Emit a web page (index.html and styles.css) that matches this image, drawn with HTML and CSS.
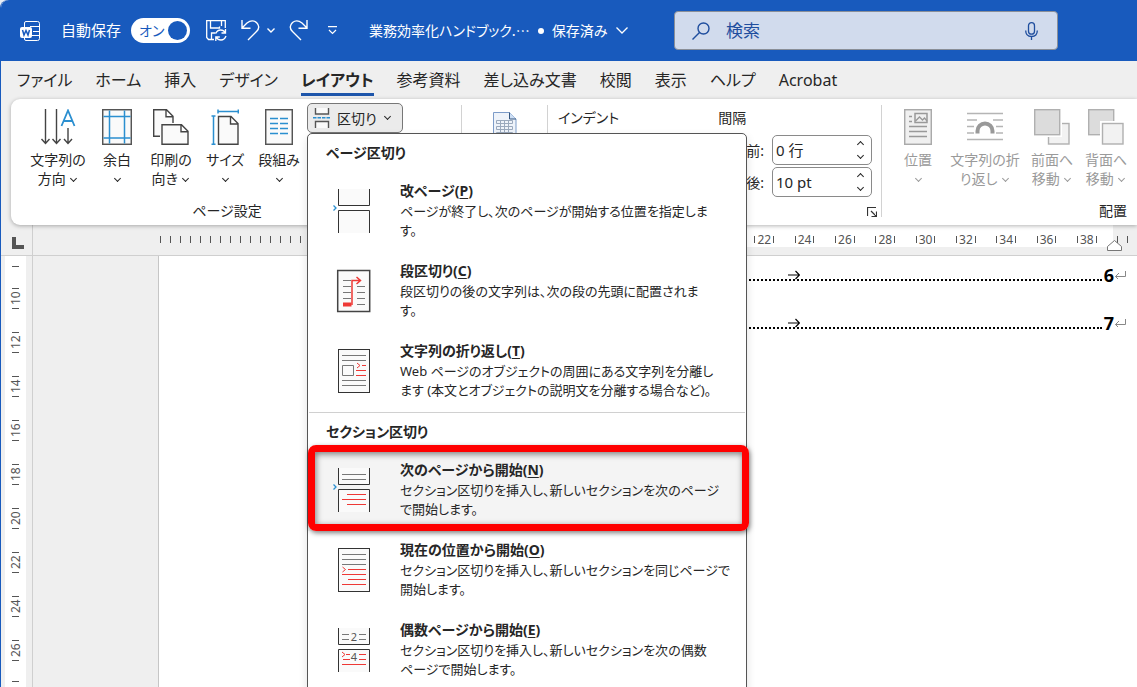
FILE: index.html
```
<!DOCTYPE html>
<html lang="ja">
<head>
  <meta charset="UTF-8">
  <meta name="viewport" content="width=device-width, initial-scale=1.0">
  <title>業務効率化ハンドブック</title>
  <link rel="stylesheet" href="styles.css">
</head>
<body>
  <div class="window">
    <!-- Title bar -->
    <header class="titlebar">
      <svg class="word-logo" width="20" height="20" viewBox="0 0 20 20" fill="none" stroke="#fff">
        <path d="M4.500 6V2q0-1.500 1.500-1.500h11.500q2 0 2 2v15q0 2-2 2H6q-1.500 0-1.500-1.500v-2M10 5.500h9.500M13 10.500h6.500M12 14.500h7.500"/>
        <rect x="0" y="6" width="12" height="11" rx="2" fill="#fff" stroke="none"/>
        <path d="M2.500 9l1.500 5 2-4.500 2 4.500 1.500-5" stroke="#185abd" stroke-width="1.500"/>
      </svg>
      <label class="autosave">自動保存
        <span class="switch">オン<input type="checkbox" checked></span>
      </label>
      <div class="quick-tools">
        <button type="button" aria-label="上書き保存">
          <svg width="21" height="21" viewBox="0 0 21 21" fill="none" stroke="#fff" stroke-width="1.300">
            <path d="M8 19.500H2.500L.7 17.500V.7h18.600V8M4.500 1v7h9V6.500M15.500 1v5M5.500 19v-6h4"/>
            <path d="M9.700 13.500q1.500-3.500 5-3.500 3 0 4.300 2.500M19.500 9v4h-4M20 16q-1.500 4-5 4-3.300 0-4.500-2.500M9.800 21v-4h4"/>
          </svg>
        </button>
        <button type="button" class="undo" aria-label="元に戻す">
          <svg width="19" height="21" viewBox="0 0 19 21" fill="none" stroke="#fff" stroke-width="1.400">
            <path d="M1 0v8.300h8.500M1 8L6 3q5-4 9.500-.5 4.500 4.500 0 9L7 20"/>
          </svg>
          <svg width="8" height="5" viewBox="0 0 8 5" fill="none" stroke="#fff" stroke-width="1.400"><path d="M.5.500L4 4 7.500.500"/></svg>
        </button>
        <button type="button" aria-label="やり直し">
          <svg width="19" height="21" viewBox="0 0 19 21" fill="none" stroke="#fff" stroke-width="1.400">
            <path d="M18 0v8.300H9.500M18 8l-5-5Q8-1 3.500 2.500q-4.500 4.500 0 9L12 20"/>
          </svg>
        </button>
        <button type="button" class="customize" aria-label="カスタマイズ">
          <svg width="9" height="9" viewBox="0 0 9 9" fill="none" stroke="#fff" stroke-width="1.200"><path d="M0 .6h9M1 4l3.500 3.500L8 4"/></svg>
        </button>
      </div>
      <button type="button" class="doc-title">
        <span>業務効率化ハンドブック.…</span><span class="bullet"></span><span>保存済み</span>
        <svg width="12" height="7" viewBox="0 0 12 7" fill="none" stroke="#fff" stroke-width="1.300"><path d="M.5.500L6 6 11.500.500"/></svg>
      </button>
      <div class="search">
        <svg width="18" height="18" viewBox="0 0 18 18" fill="none" stroke="#1f4e9e" stroke-width="1.400"><circle cx="11.500" cy="6.500" r="5.500"/><path d="M7.500 10.500L.5 17.500"/></svg>
        <input type="text" aria-label="検索" placeholder="検索">
        <button type="button" aria-label="音声入力">
          <svg width="13" height="18" viewBox="0 0 13 18" fill="none" stroke="#1f4e9e" stroke-width="1.300"><rect x="3.500" y=".7" width="6" height="11.500" rx="3"/><path d="M.7 8.500q0 6 5.800 6t5.800-6M6.500 14.500V18"/></svg>
        </button>
      </div>
    </header>

    <!-- Ribbon tabs -->
    <nav class="tabs">
      <a href="#">ファイル</a>
      <a href="#">ホーム</a>
      <a href="#">挿入</a>
      <a href="#">デザイン</a>
      <a href="#" class="active">レイアウト</a>
      <a href="#">参考資料</a>
      <a href="#">差し込み文書</a>
      <a href="#">校閲</a>
      <a href="#">表示</a>
      <a href="#">ヘルプ</a>
      <a href="#">Acrobat</a>
    </nav>

    <!-- Ribbon -->
    <section class="ribbon">
      <div class="group page-setup">
        <div class="tools">
          <button type="button" class="tool wide">
            <svg width="36" height="36" viewBox="0 0 36 36" fill="none" stroke="#444" stroke-width="1.400">
              <path d="M5.500 0v34M1.500 30l4 4.500 4-4.500M16.500 0v34M12.500 30l4 4.500 4-4.500M28 19v15M24 30l4 4.500 4-4.500"/>
              <path d="M21.500 17L28 1.500 34.500 17M24 12h8" stroke="#2b8fd0" stroke-width="1.800"/>
            </svg>
            文字列の<br>方向 <i class="chev"></i>
          </button>
          <button type="button" class="tool">
            <svg width="30" height="36" viewBox="0 0 30 36" fill="#fafafa" stroke="#555" stroke-width="1.500">
              <rect x=".7" y=".7" width="28.600" height="34.600"/>
              <path d="M7.500 1.500v33M22.500 1.500v33M1.500 7.500h27M1.500 29h27" stroke="#2b8fd0"/>
            </svg>
            余白<br><i class="chev"></i>
          </button>
          <button type="button" class="tool">
            <svg width="36" height="36" viewBox="0 0 36 36" fill="#fafafa" stroke="#444" stroke-width="1.400">
              <path d="M7 27.300H.7V.7h12.800l6.500 6.600V14M13 .7v7h7" />
              <path d="M9 15.700h19.500l6.500 6.600v13H9zM28 15.700v7h7"/>
            </svg>
            印刷の<br>向き <i class="chev"></i>
          </button>
          <button type="button" class="tool">
            <svg width="28" height="36" viewBox="0 0 28 36" fill="#fafafa" stroke="#444" stroke-width="1.400">
              <path d="M7.500 7.500H20l7 7v20.800H7.500zM19.500 7.500v7.500H27"/>
              <path d="M7 2.500h20.500M7 .5v4M27.300.5v4M2.500 7.500v27.500M.5 7h4M.5 35.300h4" stroke="#2b8fd0" stroke-width="1.500"/>
            </svg>
            サイズ<br><i class="chev"></i>
          </button>
          <button type="button" class="tool">
            <svg width="28" height="36" viewBox="0 0 28 36" fill="#fafafa" stroke="#555" stroke-width="1.500">
              <rect x=".7" y=".7" width="26.600" height="34.600"/>
              <path d="M5 9.500h8M15 9.500h8M5 14.500h8M15 14.500h8M5 19.500h8M15 19.500h8M5 24.500h8M15 24.500h8" stroke="#2b8fd0"/>
            </svg>
            段組み<br><i class="chev"></i>
          </button>

          <div class="breaks">
            <button type="button" class="breaks-button">
              <svg width="18" height="20" viewBox="0 0 18 20" fill="#fafafa" stroke="#555" stroke-width="1.400">
                <path d="M2.500 0v6h13V0M2.500 20v-6.500h13V20"/>
                <path d="M0 9.800h18" stroke="#2b8fd0" stroke-dasharray="3.500 1"/>
              </svg>
              区切り <i class="chev"></i>
            </button>

            <div class="menu">
              <h2>ページ区切り</h2>
              <button type="button" class="item">
                <svg width="38" height="44" viewBox="0 0 38 44" fill="#fafafa" stroke="#333">
                  <path d="M5.500 0v16.500h31V0M5.500 44V21.500h31V44"/>
                  <path d="M.5 16.500L3 19 .5 21.500" fill="none" stroke="#2b8fd0" stroke-width="1.300"/>
                </svg>
                <span><b>改ページ(<u>P</u>)</b>ページが終了し、次のページが開始する位置を指定しま<br>す。</span>
              </button>
              <button type="button" class="item">
                <svg width="38" height="44" viewBox="0 0 38 44" fill="#fafafa" stroke="#444" stroke-width="1.500">
                  <rect x="4.700" y="1.500" width="32" height="41"/>
                  <path d="M10 11.500h8M10 17.500h8M10 23.500h8M10 29.500h8M24 17.500h8M24 23.500h8M24 29.500h8M24 35.500h8" stroke="#777" stroke-width="1"/>
                  <path d="M19 36V11.500h8.500M23.500 8l4 3.500-4 3.500" fill="none" stroke="#ee3835"/>
                  <path d="M10 33.500h8.500v4H10z" fill="#ee3835" stroke="none"/>
                </svg>
                <span><b>段区切り(<u>C</u>)</b>段区切りの後の文字列は、次の段の先頭に配置されま<br>す。</span>
              </button>
              <button type="button" class="item">
                <svg width="38" height="44" viewBox="0 0 38 44" fill="#fafafa" stroke="#333">
                  <rect x="5.500" y=".5" width="31" height="43"/>
                  <path d="M9 6.500h24M9 11.500h24M9 31.500h24M9 36.500h24M9.500 16.500h11v10h-11z" stroke="#777"/>
                  <path d="M29 16.500h4M23 21.500h10M23 26.500h10M24 14l3 2.500-3 2.500" fill="none" stroke="#ee3835"/>
                </svg>
                <span><b>文字列の折り返し(<u>T</u>)</b>Web ページのオブジェクトの周囲にある文字列を分離し<br>ます (本文とオブジェクトの説明文を分離する場合など)。</span>
              </button>
              <hr>
              <h2>セクション区切り</h2>
              <button type="button" class="item marked">
                <svg width="38" height="44" viewBox="0 0 38 44" fill="#fafafa" stroke="#333">
                  <path d="M5.500 0v16.500h31V0M5.500 44V21.500h31V44"/>
                  <path d="M9 6.500h24M9 11.500h24" stroke="#777"/>
                  <path d="M14 26.500h19M9 31.500h24M14 36.500h19" stroke="#ee3835"/>
                  <path d="M.5 16.500L3 19 .5 21.500" fill="none" stroke="#2b8fd0" stroke-width="1.300"/>
                </svg>
                <span><b>次のページから開始(<u>N</u>)</b>セクション区切りを挿入し、新しいセクションを次のページ<br>で開始します。</span>
              </button>
              <button type="button" class="item">
                <svg width="38" height="44" viewBox="0 0 38 44" fill="#fafafa" stroke="#333">
                  <rect x="5.500" y=".5" width="31" height="43"/>
                  <path d="M9 6.500h24M9 11.500h24M9 16.500h24" stroke="#777"/>
                  <path d="M15 21.500h18M9 26.500h24M15 31.500h18M9 36.500h24M9.500 19l3 2.500-3 2.500" fill="none" stroke="#ee3835"/>
                </svg>
                <span><b>現在の位置から開始(<u>O</u>)</b>セクション区切りを挿入し、新しいセクションを同じページで<br>開始します。</span>
              </button>
              <button type="button" class="item">
                <svg width="38" height="44" viewBox="0 0 38 44" fill="#fafafa" stroke="#333">
                  <path d="M5.500 0v16.500h31V0M5.500 44V21.500h31V44"/>
                  <path d="M9 6.500h7M9 11.500h7M26 6.500h7M26 11.500h7" stroke="#777"/>
                  <path d="M13 26.500h4M10 31.500h7M26 26.500h7M26 31.500h7M9 36.500h24M9 24l3 2.500-3 2.500" fill="none" stroke="#ee3835"/>
                  <text x="21" y="13" class="icon-digit">2</text>
                  <text x="21" y="33" class="icon-digit">4</text>
                </svg>
                <span><b>偶数ページから開始(<u>E</u>)</b>セクション区切りを挿入し、新しいセクションを次の偶数<br>ページで開始します。</span>
              </button>
            </div>
          </div>
        </div>
        <p class="group-name">ページ設定</p>
      </div>

      <div class="group manuscript">
        <svg width="24" height="32" viewBox="0 0 24 32" fill="#eef3fa" stroke="#7d9cc9">
          <path d="M.5.500h16l6.500 6.500v24.500H.5z"/>
          <path d="M16.500.5V7H23" fill="#cfe0f5" stroke="#33557f"/>
          <path d="M3.500 8.500h16v3h-16zM3.500 14.500h16v3h-16zM3.500 20.500h16v3h-16zM7.500 8.500v15M11.500 8.500v15M15.500 8.500v15" stroke="#9aa9bd"/>
        </svg>
      </div>

      <div class="group paragraph">
        <div class="columns">
          <p>インデント</p>
          <div>
            <p>間隔</p>
            <div class="spin-row">
              <label for="before">前:</label>
              <div class="spin">
                <input type="text" id="before" value="0 行">
                <button type="button" aria-label="前を増やす"><i class="chev up"></i></button>
                <button type="button" aria-label="前を減らす"><i class="chev"></i></button>
              </div>
            </div>
            <div class="spin-row">
              <label for="after">後:</label>
              <div class="spin">
                <input type="text" id="after" value="10 pt">
                <button type="button" aria-label="後を増やす"><i class="chev up"></i></button>
                <button type="button" aria-label="後を減らす"><i class="chev"></i></button>
              </div>
            </div>
          </div>
        </div>
        <button type="button" class="launcher" aria-label="段落の設定">
          <svg width="10" height="10" viewBox="0 0 10 10" fill="none" stroke="#333"><path d="M.5 9V.5H9M4 4l5 5M9.500 4.500v5h-5" stroke-width="1.200"/></svg>
        </button>
      </div>

      <div class="group arrange">
        <div class="tools">
          <button type="button" class="tool" disabled>
            <svg width="28" height="36" viewBox="0 0 28 36" fill="#f0f0f0" stroke="#aaa" stroke-width="1.500">
              <rect x=".7" y=".7" width="26.600" height="34.600"/>
              <rect x="11" y="4.500" width="12" height="9" stroke="#999"/>
              <path d="M11.500 12l4-4 3 3 2-2 2.500 3M5 7.500h3M5 12.500h3M5 17.500h18M5 22.500h18M5 27.500h18" fill="none" stroke="#999" stroke-width="1.300"/>
            </svg>
            位置<br><i class="chev"></i>
          </button>
          <button type="button" class="tool arc" disabled>
            <svg width="36" height="36" viewBox="0 0 36 36" fill="none" stroke="#b5b5b5" stroke-width="1.300">
              <path d="M0 4.500h36M0 11h10M26 11h10M0 17.500h7M29 17.500h7M0 24h7M29 24h7M0 30.500h36"/>
              <path d="M10.500 24.500v-2.500a7.500 7.500 0 0 1 15 0v2.500" stroke="#999" stroke-width="4"/>
            </svg>
            文字列の折<br>り返し <i class="chev"></i>
          </button>
          <button type="button" class="tool" disabled>
            <svg width="36" height="36" viewBox="0 0 36 36" fill="#f2f2f2" stroke="#b0b0b0" stroke-width="1.400">
              <rect x="14.500" y="14.500" width="20.500" height="20.500"/>
              <path d="M0 0h28v28H0z" fill="#fff" stroke="none"/>
              <rect x=".7" y=".7" width="25" height="25" fill="#dcdcdc"/>
            </svg>
            前面へ<br>移動 <i class="chev"></i>
          </button>
          <button type="button" class="tool" disabled>
            <svg width="36" height="36" viewBox="0 0 36 36" fill="#f2f2f2" stroke="#b0b0b0" stroke-width="1.400">
              <rect x=".7" y=".7" width="25" height="25" fill="#dcdcdc"/>
              <path d="M12 12h24v24H12z" fill="#fff" stroke="none"/>
              <rect x="14.500" y="14.500" width="20.500" height="20.500"/>
            </svg>
            背面へ<br>移動 <i class="chev"></i>
          </button>
        </div>
        <p class="group-name">配置</p>
      </div>
    </section>

    <!-- Horizontal ruler -->
    <div class="ruler">
      <div class="corner"></div>
      <div class="ticks"></div>
      <ol class="scale">
        <li>22</li><li>24</li><li>26</li><li>28</li><li>30</li><li>32</li><li>34</li><li>36</li><li>38</li>
      </ol>
      <div class="ruler-end">
        <svg width="24" height="24" viewBox="0 0 24 24" fill="none" stroke="#555"><path d="M4.500 11v7M14.500 11v7"/></svg>
        <svg class="indent" width="15" height="11" viewBox="0 0 15 11" fill="#fff" stroke="#777"><path d="M.5 10.500V6.500l7-6 7 6v4z"/></svg>
      </div>
    </div>

    <!-- Document area -->
    <main class="workspace">
      <ol class="side-ruler">
        <li class="edge"></li>
        <li>10</li><li>12</li><li>14</li><li>16</li><li>18</li><li>20</li><li>22</li><li>24</li><li>26</li>
        <li class="edge"></li>
      </ol>
      <article class="page">
        <p class="toc-line">
          <span class="leader"><svg width="12" height="10" viewBox="0 0 12 10" fill="none" stroke="#000" stroke-width="1.200"><path d="M0 5h11.500M7.500 1l4 4-4 4"/></svg></span>
          <b>6</b>
          <svg width="11" height="8" viewBox="0 0 11 8" fill="none" stroke="#888"><path d="M10.500 0v5.500H.5M4 2L.5 5.500 3 8"/></svg>
        </p>
        <p class="toc-line">
          <span class="leader"><svg width="12" height="10" viewBox="0 0 12 10" fill="none" stroke="#000" stroke-width="1.200"><path d="M0 5h11.500M7.500 1l4 4-4 4"/></svg></span>
          <b>7</b>
          <svg width="11" height="8" viewBox="0 0 11 8" fill="none" stroke="#888"><path d="M10.500 0v5.500H.5M4 2L.5 5.500 3 8"/></svg>
        </p>
      </article>
    </main>
  </div>
</body>
</html>
```
FILE: styles.css
```
* {
  box-sizing: border-box;
}

body {
  margin: 0;
  overflow: hidden;
  background: #e9eef5;
  color: #262626;
  font-family: "Noto Sans", "Noto Sans CJK JP", sans-serif;
  font-feature-settings: "palt";
  font-size: 14px;
  line-height: 19px;
}

h2, p, ol {
  margin: 0;
  padding: 0;
}

ol {
  list-style: none;
}

button, input {
  font: inherit;
  font-feature-settings: inherit;
  color: inherit;
  background: none;
  border: none;
  margin: 0;
  padding: 0;
}

svg {
  display: block;
  flex-shrink: 0;
}

.window {
  display: flex;
  flex-direction: column;
  height: 100vh;
  border-left: 1px solid #185abd;
  border-top-left-radius: 8px;
  background: #efefef;
}

/* Title bar */
.titlebar {
  display: flex;
  align-items: center;
  flex-shrink: 0;
  height: 61px;
  padding: 0 79px 0 19px;
  border-top-left-radius: 8px;
  background: #185abd;
  color: #fff;
  white-space: nowrap;
}

.autosave {
  display: flex;
  align-items: center;
  gap: 10px;
  margin-left: 21px;
  font-size: 15px;
}

.switch {
  display: flex;
  align-items: center;
  justify-content: space-between;
  width: 59px;
  height: 25px;
  padding: 0 3px 0 8px;
  border-radius: 13px;
  background: #fff;
  color: #185abd;
  font-size: 14px;
}

.switch input {
  appearance: none;
  width: 19px;
  height: 19px;
  border-radius: 50%;
  background: #185abd;
}

.quick-tools {
  display: flex;
  align-items: center;
  gap: 14px;
  margin-left: 16px;
}

.undo {
  display: flex;
  align-items: center;
  gap: 7px;
}

.customize {
  margin-left: 6px;
}

.doc-title {
  display: flex;
  align-items: center;
  width: 259px;
  margin-left: 32px;
  font-family: "Noto Sans CJK JP", sans-serif;
}

.doc-title svg {
  margin-left: auto;
}

.bullet {
  width: 6px;
  height: 6px;
  margin: 0 8px;
  border-radius: 50%;
  background: #fff;
}

.search {
  display: flex;
  align-items: center;
  flex: 1;
  height: 39px;
  margin-left: 46px;
  padding: 0 19px 0 17px;
  border: 1px solid #8a8f98;
  border-radius: 4px;
  background: #d1dbed;
  color: #1f4e9e;
}

.search input {
  flex: 1;
  min-width: 0;
  margin-left: 16px;
  font-size: 17px;
  outline: none;
}

.search input::placeholder {
  color: #1f4e9e;
}

/* Ribbon tabs */
.tabs {
  display: flex;
  flex-shrink: 0;
  gap: 23px;
  height: 38px;
  padding: 0 16px;
  font-size: 16px;
  line-height: 38px;
  white-space: nowrap;
}

.tabs a {
  color: inherit;
  text-decoration: none;
}

.tabs .active {
  height: 35px;
  border-bottom: 3px solid #1e56ab;
  font-weight: bold;
}

/* Ribbon */
.ribbon {
  position: relative;
  z-index: 2;
  display: flex;
  flex-shrink: 0;
  height: 126px;
  margin-left: 10px;
  border-radius: 9px 0 0 9px;
  background: #fff;
  box-shadow: 0 1px 4px rgba(0, 0, 0, 0.3);
  white-space: nowrap;
}

.group {
  display: flex;
  flex-direction: column;
  justify-content: space-between;
  flex-shrink: 0;
  margin: 4px 0 5px;
}

.group + .group {
  border-left: 1px solid #d2d2d2;
  margin: 6px 0 8px;
}

.tools {
  display: flex;
  align-items: flex-start;
}

.group-name {
  text-align: center;
}

.page-setup {
  width: 450px;
}

.page-setup .tools {
  padding-left: 15px;
}

.page-setup .group-name {
  padding-right: 18px;
}

.tool {
  width: 54px;
  padding-top: 6px;
  text-align: center;
}

.tool svg {
  margin: 0 auto 5px;
}

.tool.wide {
  width: 64px;
}

.tool.arc {
  width: 80px;
}

.tool:disabled {
  color: #9a9a9a;
}

.chev {
  display: inline-block;
  width: 5px;
  height: 5px;
  margin: 0 2px 3px;
  border: solid currentColor;
  border-width: 0 1px 1px 0;
  transform: rotate(45deg);
}

.chev.up {
  margin: 3px 2px 0;
  transform: rotate(225deg);
}

.manuscript {
  width: 86px;
  align-items: center;
  padding-top: 7px;
}

.paragraph {
  width: 334px;
}

.columns {
  display: flex;
  justify-content: space-between;
  padding: 3px 9px 0 10px;
}

.spin-row {
  display: flex;
  align-items: center;
  gap: 8px;
  margin-top: 2px;
  padding-left: 28px;
}

.columns p {
  margin-bottom: 8px;
}

.spin {
  display: grid;
  grid-template-columns: 1fr 22px;
  width: 100px;
  height: 30px;
  padding-left: 3px;
  border: 1px solid #8a8a8a;
  border-radius: 5px;
  background: #fff;
}

.spin input {
  grid-row: 1 / 3;
  min-width: 0;
  width: 100%;
  font-size: 15px;
}

.spin button {
  display: flex;
  align-items: center;
  justify-content: center;
}

.launcher {
  align-self: flex-end;
  margin-right: 4px;
}

.arrange .tools {
  margin-top: -2px;
  padding-left: 9px;
}

.arrange {
  flex: 1;
  min-width: 0;
}

.arrange .group-name {
  padding-right: 10px;
  text-align: right;
}

.group + .group .group-name {
  margin-bottom: -3px;
}

/* Breaks drop-down */
.breaks {
  position: relative;
  padding-left: 1px;
}

.breaks-button {
  display: flex;
  align-items: center;
  gap: 6px;
  width: 96px;
  height: 30px;
  padding-left: 5px;
  border: 1px solid #777;
  border-radius: 5px;
  background: #ebebeb;
}

.menu {
  position: absolute;
  top: 30px;
  left: 1px;
  width: 440px;
  padding-bottom: 20px;
  border: 1px solid #555;
  border-radius: 5px;
  background: #fff;
  box-shadow: 0 4px 10px rgba(0, 0, 0, 0.12);
}

.menu h2 {
  padding: 0 18px;
  font-size: 14px;
  line-height: 38px;
}

.menu hr {
  height: 1px;
  margin: 0 1px;
  border: none;
  background: #d0d0d0;
}

.item {
  position: relative;
  display: flex;
  align-items: flex-start;
  gap: 29px;
  width: 100%;
  height: 80px;
  padding: 8px 0 0 25px;
  font-size: 13px;
  text-align: left;
}

.item svg {
  margin-top: 9px;
}

.item b {
  display: block;
  font-size: 14px;
  line-height: 22px;
}

.item u {
  text-underline-offset: 2px;
}

.icon-digit {
  fill: #555;
  stroke: none;
  font-size: 11px;
  text-anchor: middle;
}

.item.marked {
  background: #f4f4f4;
}

.item.marked::after {
  content: "";
  position: absolute;
  inset: -6px -3px 0 0;
  border: 7px solid #f00;
  border-radius: 8px;
  box-shadow: 1px 2px 5px rgba(0, 0, 0, 0.5), inset 1px 2px 6px rgba(0, 0, 0, 0.5);
}

/* Rulers */
.ruler {
  display: flex;
  flex-shrink: 0;
  height: 31px;
  border-bottom: 1px solid #cfcfcf;
  color: #555;
  font-size: 12px;
}

.corner {
  width: 32px;
  border-right: 1px solid #cfcfcf;
}

.corner::before {
  content: "";
  display: block;
  width: 8px;
  height: 8px;
  margin: 12px 0 0 11px;
  border: solid #555;
  border-width: 0 0 4px 4px;
}

.ticks {
  width: 161px;
  height: 7px;
  margin: 11px 0 0 127px;
  background: repeating-linear-gradient(to right, #555 0 1px, transparent 1px 10px);
}

.scale {
  display: grid;
  grid-template-columns: repeat(19, 1fr);
  flex: 1;
  height: 22px;
  padding: 0 6px 0 20px;
  background: #fff;
}

.scale li, .side-ruler li {
  display: flex;
  align-items: center;
  justify-content: center;
}

.scale li {
  gap: 2px;
  padding-top: 5px;
}

.scale li:first-child {
  grid-column-start: 11;
}

.scale li::before, .scale li::after {
  content: "";
  width: 1px;
  height: 7px;
  background: #555;
}

.ruler-end {
  position: relative;
  width: 24px;
}

.indent {
  position: absolute;
  top: 15px;
  left: -6px;
}

.workspace {
  display: flex;
  flex: 1;
  min-height: 0;
  overflow: hidden;
}

.side-ruler {
  flex-shrink: 0;
  width: 32px;
  padding-left: 4px;
  border-right: 1px solid #cfcfcf;
  color: #555;
  font-size: 12px;
  background: linear-gradient(to right, #efefef 4px, #fff 4px 25px, #efefef 25px);
}

.side-ruler li {
  gap: 3px;
  width: 21px;
  height: 44px;
  padding-bottom: 3px;
  writing-mode: vertical-rl;
  transform: rotate(180deg);
}

.side-ruler li::before, .side-ruler li::after {
  content: "";
  width: 7px;
  height: 1px;
  background: #555;
}

.side-ruler .edge {
  height: 19px;
}

.side-ruler .edge::after {
  display: none;
}

/* Document page */
.page {
  flex: 1;
  margin-left: 125px;
  padding: 8px 11px 0 0;
  border-left: 1px solid #c6c6c6;
  background: #fff;
}

.toc-line {
  display: flex;
  align-items: center;
  height: 22px;
  margin-bottom: 26px;
  color: #000;
  font-size: 18px;
}

.toc-line b {
  margin: 0 1px 0 2px;
}

.leader {
  flex: 1;
  align-self: flex-start;
  display: flex;
  justify-content: flex-end;
  height: 17px;
  margin-left: 40%;
  padding: 6px 302px 0 0;
  border-bottom: 2px dotted #000;
}
```
